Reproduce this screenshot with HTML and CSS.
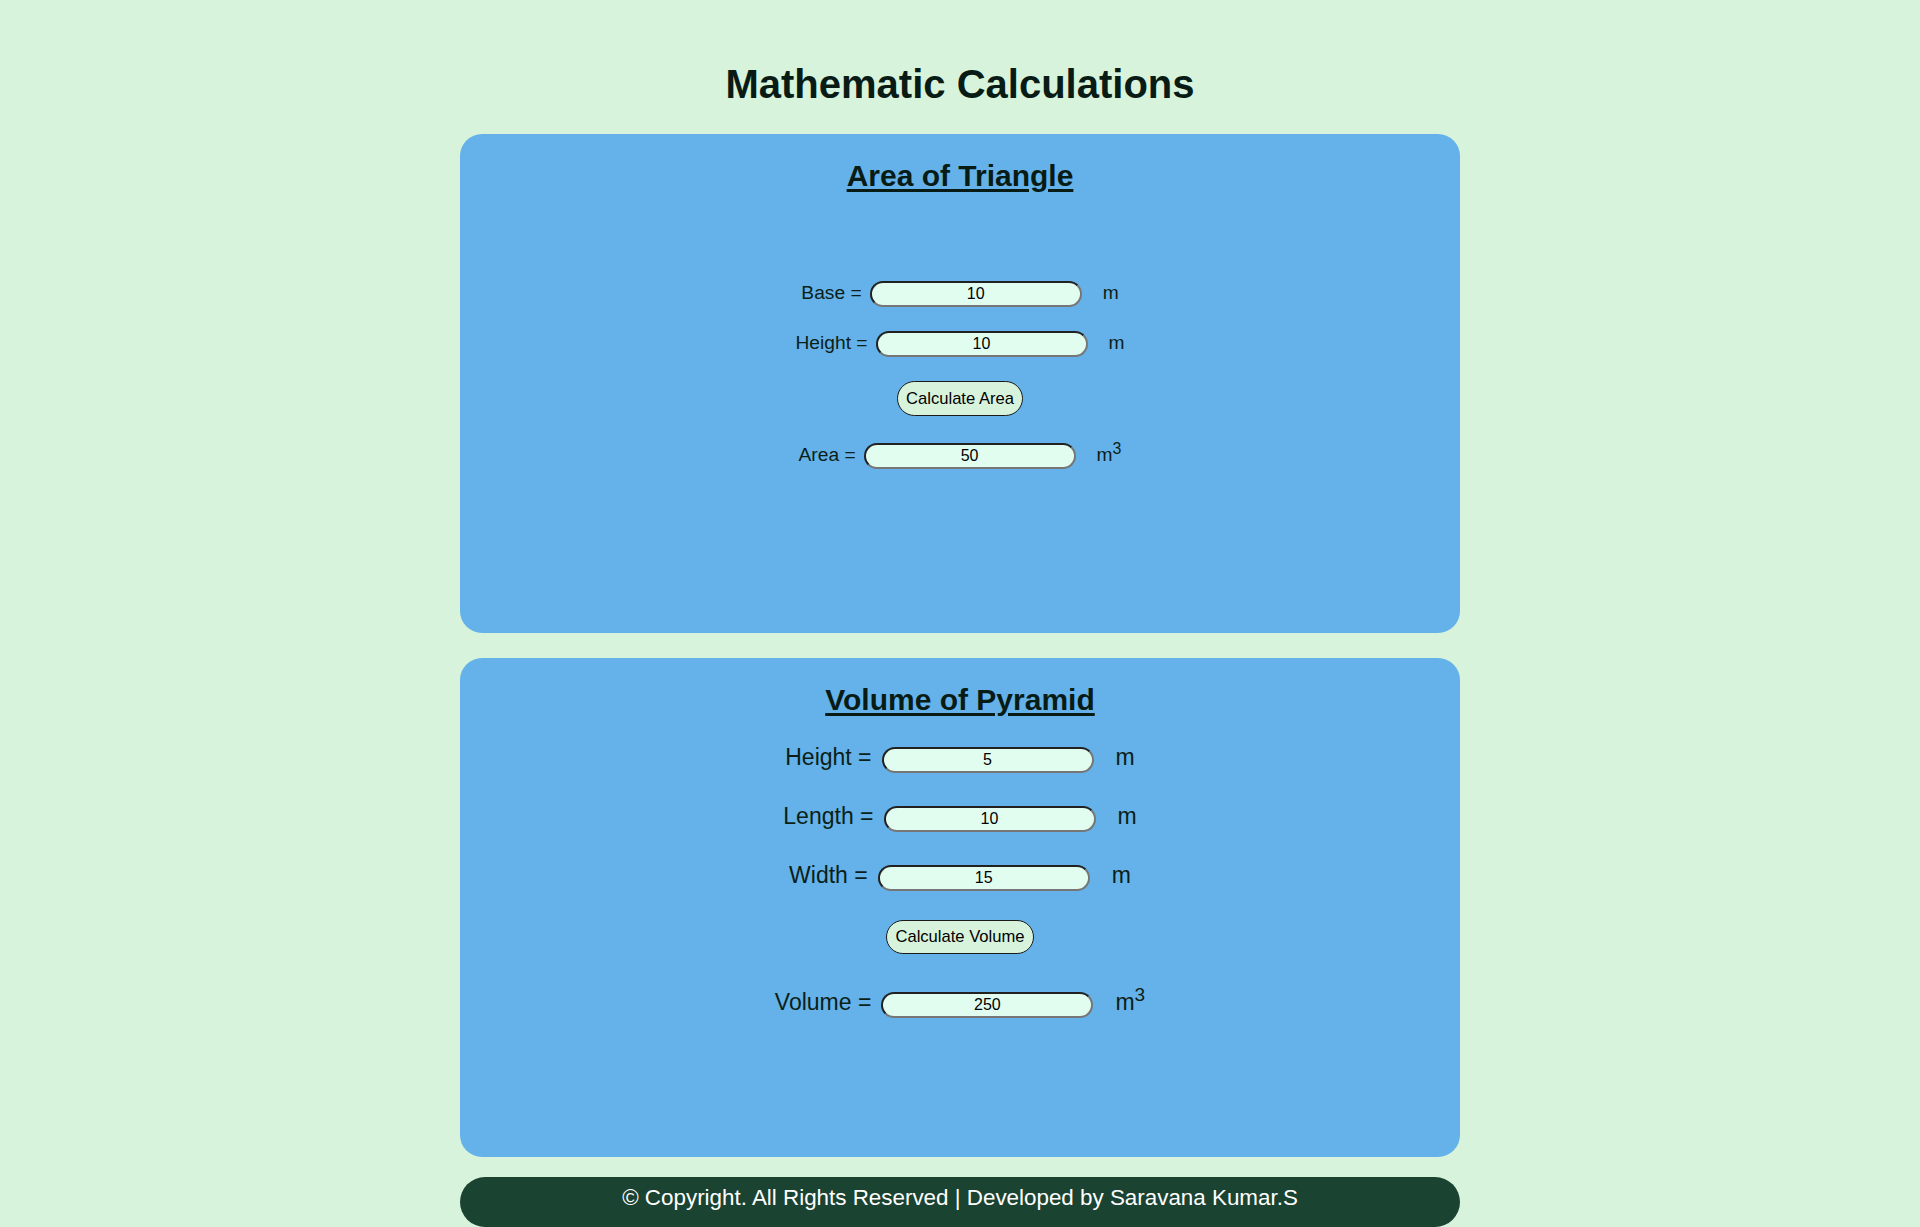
FILE: index.html
```html
<!DOCTYPE html>
<html lang="en">
<head>
<meta charset="utf-8">
<title>Mathematic Calculations</title>
<link rel="stylesheet" href="styles.css">
</head>
<body>
  <h1 class="page-title">Mathematic Calculations</h1>

  <section class="card card-triangle">
    <h2 class="card-title">Area of Triangle</h2>
    <div class="row row-first">
      <span class="label">Base =</span>
      <input class="field" type="text" value="10">
      <span class="unit">m</span>
    </div>
    <div class="row">
      <span class="label">Height =</span>
      <input class="field" type="text" value="10">
      <span class="unit">m</span>
    </div>
    <div class="btn-row">
      <button class="calc-btn" type="button">Calculate Area</button>
    </div>
    <div class="row row-result">
      <span class="label">Area =</span>
      <input class="field" type="text" value="50">
      <span class="unit">m<sup>3</sup></span>
    </div>
  </section>

  <section class="card card-pyramid">
    <h2 class="card-title">Volume of Pyramid</h2>
    <div class="row row-first">
      <span class="label">Height =</span>
      <input class="field" type="text" value="5">
      <span class="unit">m</span>
    </div>
    <div class="row">
      <span class="label">Length =</span>
      <input class="field" type="text" value="10">
      <span class="unit">m</span>
    </div>
    <div class="row">
      <span class="label">Width =</span>
      <input class="field" type="text" value="15">
      <span class="unit">m</span>
    </div>
    <div class="btn-row">
      <button class="calc-btn" type="button">Calculate Volume</button>
    </div>
    <div class="row row-result">
      <span class="label">Volume =</span>
      <input class="field" type="text" value="250">
      <span class="unit">m<sup>3</sup></span>
    </div>
  </section>

  <footer class="footer">© Copyright. All Rights Reserved | Developed by Saravana Kumar.S</footer>
</body>
</html>
```

FILE: styles.css
```css
html, body {
  margin: 0;
  padding: 0;
}

body {
  background: #d8f3dc;
  font-family: "Liberation Sans", Arial, sans-serif;
  color: #0b1f18;
  display: flex;
  flex-direction: column;
  align-items: center;
  height: 1227px;
  overflow: hidden;
}

.page-title {
  font-size: 40px;
  font-weight: bold;
  line-height: 46px;
  margin: 61px 0 27px;
  color: #081c15;
  text-align: center;
}

.card {
  box-sizing: border-box;
  width: 1000px;
  height: 499px;
  background: #64b2e9;
  border-radius: 22px;
  padding-top: 24px;
  display: flex;
  flex-direction: column;
  align-items: center;
  flex-shrink: 0;
}

.card-pyramid {
  margin-top: 25px;
}

.card-title {
  margin: 0;
  font-size: 30px;
  font-weight: bold;
  line-height: 35px;
  text-decoration: underline;
  text-decoration-thickness: 3px;
  text-underline-offset: 3px;
  color: #081c15;
}

.row {
  display: flex;
  align-items: baseline;
  justify-content: center;
}

.label {
  color: #0b1f18;
}

.unit {
  color: #0b1f18;
}

.unit sup {
  font-size: 0.83em;
  line-height: 0;
}

.field {
  box-sizing: border-box;
  width: 212px;
  height: 26px;
  padding: 0 4px;
  border: 2px inset rgb(118, 118, 118);
  border-radius: 13px;
  background: #e1fdef;
  font-family: "Liberation Sans", Arial, sans-serif;
  font-size: 16px;
  color: #000;
  text-align: center;
  outline: none;
}

.btn-row {
  display: flex;
  justify-content: center;
}

.calc-btn {
  box-sizing: border-box;
  padding: 0 8px;
  border: 1px solid #1a1a1a;
  border-radius: 18px;
  background: #d8f3dc;
  font-family: "Liberation Sans", Arial, sans-serif;
  font-size: 16.6px;
  color: #000;
  line-height: 18px;
}

/* Triangle card */
.card-triangle .row {
  font-size: 19.2px;
  margin-top: 24px;
}
.card-triangle .field {
  margin: 0 21px 0 8px;
}
.card-triangle .row.row-first {
  margin-top: 88px;
}
.card-triangle .btn-row {
  margin-top: 24px;
}
.card-triangle .calc-btn {
  height: 35px;
}
.card-triangle .row.row-result {
  margin-top: 27px;
}

/* Pyramid card */
.card-pyramid .row {
  font-size: 23px;
  margin-top: 30px;
}
.card-pyramid .field {
  margin: 0 22px 0 10px;
}
.card-pyramid .row.row-first {
  margin-top: 27px;
}
.card-pyramid .btn-row {
  margin-top: 29px;
}
.card-pyramid .calc-btn {
  height: 34px;
}
.card-pyramid .row.row-result {
  margin-top: 35px;
}

.footer {
  box-sizing: border-box;
  width: 1000px;
  height: 50px;
  margin-top: 20px;
  flex-shrink: 0;
  background: #1b4332;
  border-radius: 25px;
  color: #ffffff;
  font-size: 22.4px;
  line-height: 26px;
  padding-top: 8px;
  text-align: center;
}
```
